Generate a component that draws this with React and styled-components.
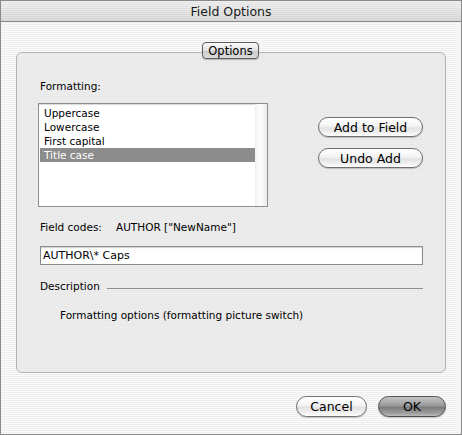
import React from 'react';
import styled, { createGlobalStyle, css } from 'styled-components';

const GlobalStyle = createGlobalStyle`
  html, body {
    margin: 0;
    padding: 0;
    background: #ffffff;
  }
  body {
    font-family: "DejaVu Sans", "Liberation Sans", sans-serif;
    color: #000;
  }
  * { box-sizing: border-box; }
`;

const pinstripe = css`
  background: repeating-linear-gradient(
    to bottom,
    #f9f9f9 0px,
    #f9f9f9 1px,
    #efefef 1px,
    #efefef 2px
  );
`;

const Window = styled.div`
  width: 462px;
  height: 435px;
  border: 1px solid #8a8a8a;
  display: flex;
  flex-direction: column;
  ${pinstripe}
`;

const TitleBar = styled.div`
  height: 21px;
  flex: none;
  display: flex;
  align-items: center;
  justify-content: center;
  border-bottom: 1px solid #8c8c8c;
  background:
    repeating-linear-gradient(to bottom, rgba(255,255,255,0.25) 0 1px, rgba(0,0,0,0.02) 1px 2px),
    linear-gradient(to bottom, #ececec, #d4d4d4);
  font-size: 12.5px;
  color: #1a1a1a;
`;

const Body = styled.div`
  flex: 1;
  display: flex;
  flex-direction: column;
  padding: 30px 15px 0 15px;
`;

const Panel = styled.div`
  position: relative;
  height: 321px;
  border: 1px solid #b2b2b2;
  border-radius: 6px;
  background: repeating-linear-gradient(
    to bottom,
    #ededed 0px,
    #ededed 1px,
    #e8e8e8 1px,
    #e8e8e8 2px
  );
  padding: 27px 22px 0 21px;
  display: flex;
  flex-direction: column;
`;

const TabLabel = styled.div`
  position: absolute;
  top: -11px;
  left: 185px;
  width: 57px;
  height: 17px;
  border: 1px solid #5e5e5e;
  border-radius: 4px;
  background: linear-gradient(to bottom, #fbfbfb 0%, #e2e2e2 50%, #c9c9c9 51%, #dcdcdc 100%);
  box-shadow: 0 1px 1px rgba(0,0,0,0.25);
  font-size: 11.5px;
  display: flex;
  align-items: center;
  justify-content: center;
`;

const Label = styled.div`
  font-size: 10.5px;
  line-height: 13px;
  margin-left: ${p => p.$indent || 2}px;
  margin-top: ${p => p.$top || 0}px;
`;

const Row = styled.div`
  display: flex;
  align-items: flex-start;
  margin-top: ${p => p.$top || 0}px;
`;

const ListBox = styled.div`
  width: 230px;
  height: 104px;
  border: 1px solid #8e8e8e;
  background: #fff;
  box-shadow: inset 0 1px 1px rgba(0,0,0,0.15);
  display: flex;
`;

const ListItems = styled.div`
  flex: 1;
  padding: 2px 0 0 1px;
`;

const ListItem = styled.div`
  height: 14px;
  line-height: 14px;
  font-size: 10.5px;
  padding-left: 4px;
  background: ${p => (p.$selected ? '#8c8c8c' : 'transparent')};
  color: ${p => (p.$selected ? '#fff' : '#000')};
`;

const ScrollTrack = styled.div`
  width: 12px;
  background: linear-gradient(to right, #f4f4f4, #fdfdfd 40%, #ececec);
  border-left: 1px solid #f0f0f0;
`;

const ButtonColumn = styled.div`
  display: flex;
  flex-direction: column;
  gap: 11px;
  margin-left: 50px;
  margin-top: 14px;
`;

const AquaButton = styled.button`
  width: ${p => p.$w}px;
  height: ${p => p.$h || 20}px;
  border: 1px solid ${p => (p.$default ? '#4f4f4f' : '#6f6f6f')};
  border-radius: 11px;
  padding: 0;
  font-family: inherit;
  font-size: 12.5px;
  color: #000;
  background: ${p =>
    p.$default
      ? 'linear-gradient(to bottom, #c4c4c4 0%, #9a9a9a 45%, #7c7c7c 55%, #9d9d9d 85%, #bdbdbd 100%)'
      : 'linear-gradient(to bottom, #ffffff 0%, #f3f3f3 45%, #e2e2e2 55%, #f2f2f2 85%, #ffffff 100%)'};
  box-shadow: 0 1px 1px rgba(0,0,0,0.2);
  display: flex;
  align-items: center;
  justify-content: center;
`;

const FieldRow = styled.div`
  display: flex;
  font-size: 10.5px;
  line-height: 13px;
  margin-top: 14px;
  margin-left: 2px;
`;

const FieldKey = styled.span`
  width: 76px;
`;

const TextInput = styled.div`
  width: 383px;
  height: 19px;
  margin: 12px 0 0 2px;
  border: 1px solid #8a8a8a;
  background: #fff;
  box-shadow: inset 0 1px 1px rgba(0,0,0,0.18);
  font-size: 11px;
  line-height: 17px;
  padding-left: 2px;
`;

const SectionRow = styled.div`
  display: flex;
  align-items: center;
  margin: 15px 0 0 2px;
  font-size: 10.5px;
  line-height: 13px;
`;

const Rule = styled.div`
  flex: 1;
  height: 1px;
  margin: 4px 0 0 7px;
  background: #8e8e8e;
`;

const Footer = styled.div`
  display: flex;
  justify-content: flex-end;
  gap: 11px;
  margin-top: 23px;
`;

export default function App() {
  const formats = ['Uppercase', 'Lowercase', 'First capital', 'Title case'];
  return (
    <>
      <GlobalStyle />
      <Window>
        <TitleBar>Field Options</TitleBar>
        <Body>
          <Panel>
            <TabLabel>Options</TabLabel>
            <Label>Formatting:</Label>
            <Row $top={10}>
              <ListBox>
                <ListItems>
                  {formats.map(f => (
                    <ListItem key={f} $selected={f === 'Title case'}>
                      {f}
                    </ListItem>
                  ))}
                </ListItems>
                <ScrollTrack />
              </ListBox>
              <ButtonColumn>
                <AquaButton $w={105}>Add to Field</AquaButton>
                <AquaButton $w={105}>Undo Add</AquaButton>
              </ButtonColumn>
            </Row>
            <FieldRow>
              <FieldKey>Field codes:</FieldKey>
              <span>AUTHOR ["NewName"]</span>
            </FieldRow>
            <TextInput>AUTHOR\* Caps</TextInput>
            <SectionRow>
              <span>Description</span>
              <Rule />
            </SectionRow>
            <Label $indent={22} $top={16}>
              Formatting options (formatting picture switch)
            </Label>
          </Panel>
          <Footer>
            <AquaButton $w={71} $h={21}>Cancel</AquaButton>
            <AquaButton $w={68} $h={21} $default>OK</AquaButton>
          </Footer>
        </Body>
      </Window>
    </>
  );
}
